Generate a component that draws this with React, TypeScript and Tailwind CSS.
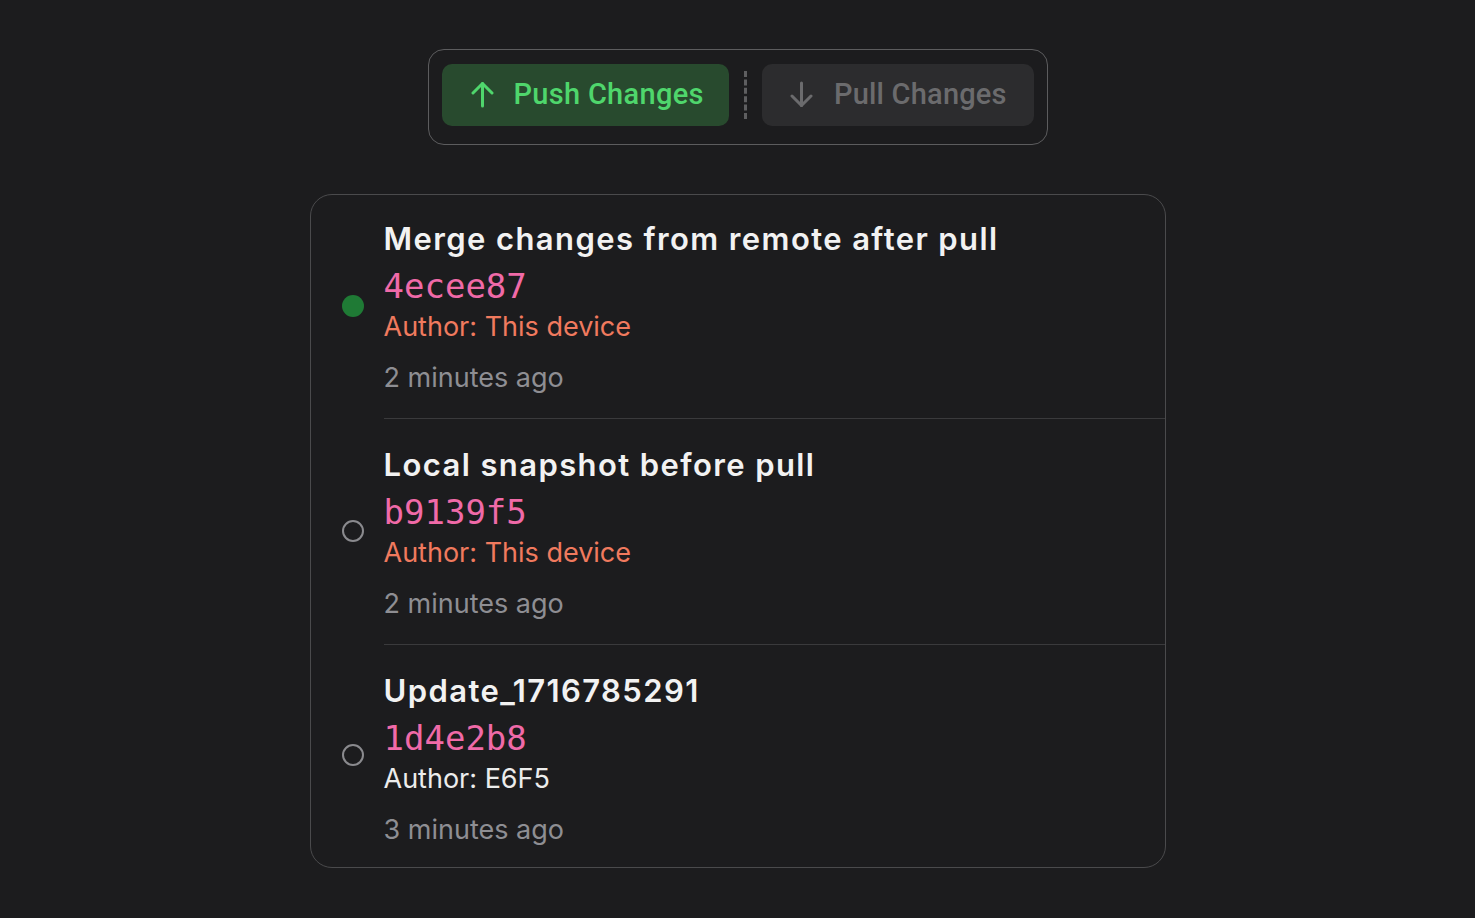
import React from "react";

type Commit = {
  title: string;
  hash: string;
  author: string;
  mine: boolean;
  time: string;
  current: boolean;
};

const commits: Commit[] = [
  {
    title: "Merge changes from remote after pull",
    hash: "4ecee87",
    author: "This device",
    mine: true,
    time: "2 minutes ago",
    current: true,
  },
  {
    title: "Local snapshot before pull",
    hash: "b9139f5",
    author: "This device",
    mine: true,
    time: "2 minutes ago",
    current: false,
  },
  {
    title: "Update_1716785291",
    hash: "1d4e2b8",
    author: "E6F5",
    mine: false,
    time: "3 minutes ago",
    current: false,
  },
];

const Arrow = ({ down = false }: { down?: boolean }) => (
  <svg
    width="23"
    height="27"
    viewBox="0 0 23 27"
    fill="none"
    stroke="currentColor"
    strokeWidth="3"
    strokeLinecap="round"
    strokeLinejoin="round"
    className={down ? "rotate-180" : ""}
  >
    <path d="M11.5 25V2.5" />
    <path d="M2 12L11.5 2.5L21 12" />
  </svg>
);

const App = () => {
  return (
    <div className="min-h-[918px] w-full bg-[#1c1c1e] flex flex-col items-center pt-[49px] font-['Inter',sans-serif]">
      {/* toolbar */}
      <div className="flex items-start gap-[15px] w-[620px] h-[96px] px-[13px] pt-[13.5px] rounded-[16px] border-[1.5px] border-[#5c5c5e] font-['Roboto',sans-serif]">
        <button className="flex items-center gap-[20px] h-[62px] w-[288px] pl-[29px] rounded-[10px] bg-[#284a2e] text-[#4fd66c] text-[29px] tracking-[0.3px] font-medium">
          <Arrow />
          <span>Push Changes</span>
        </button>
        <div className="mt-[7px] h-[48px] border-l-[3px] border-dashed border-[#5e5e60]" />
        <button className="flex items-center gap-[21px] h-[62px] w-[272px] pl-[28px] rounded-[10px] bg-[#2c2c2e] text-[#6b6b6d] text-[29px] tracking-[0.2px] font-medium">
          <Arrow down />
          <span>Pull Changes</span>
        </button>
      </div>

      {/* commit list */}
      <div className="mt-[49px] w-[856px] rounded-[22px] border-[1.5px] border-[#4a4a4c] overflow-hidden">
        {commits.map((c, i) => {
          const last = i === commits.length - 1;
          return (
            <div key={c.hash} className="flex items-center">
              <div className="w-[73px] flex justify-end pr-[20px] shrink-0 -mt-[2px]">
                {c.current ? (
                  <div className="w-[22px] h-[22px] rounded-full bg-[#1f7a35]" />
                ) : (
                  <div className="w-[22px] h-[22px] rounded-full border-[2px] border-[#8a8a8e]" />
                )}
              </div>
              <div
                className={
                  "flex-1 flex flex-col " +
                  (i === 0 ? "pt-[25px] " : "pt-[27px] ") +
                  (last ? "pb-[19px]" : "pb-[22px] border-b border-[#3a3a3c]")
                }
              >
                <div className="text-[31px] leading-[38px] font-semibold tracking-[1.4px] text-[#f2f2f2]">
                  {c.title}
                </div>
                <div className="mt-[6px] text-[34px] leading-[44px] text-[#f06aa8] font-['DejaVu_Sans_Mono',monospace]">
                  {c.hash}
                </div>
                <div
                  className={
                    "mt-[1px] text-[27px] leading-[36px] " +
                    (c.mine ? "text-[#f07a5e]" : "text-[#ececec]")
                  }
                >
                  Author: {c.author}
                </div>
                <div className="mt-[15px] text-[27px] leading-[36px] text-[#8e8e93]">
                  {c.time}
                </div>
              </div>
            </div>
          );
        })}
      </div>
    </div>
  );
};

export default App;
